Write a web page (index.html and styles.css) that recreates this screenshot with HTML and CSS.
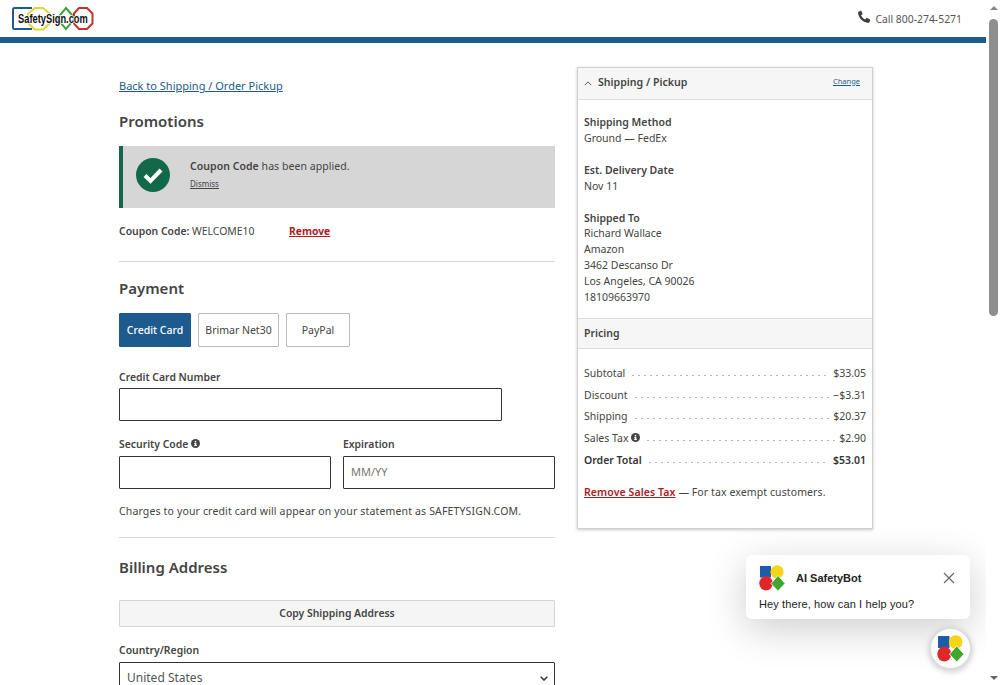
FILE: index.html
```html
<!DOCTYPE html>
<html lang="en">
<head>
<meta charset="utf-8">
<title>Checkout</title>
<link rel="stylesheet" href="styles.css">
</head>
<body>
<div class="window">
  <div class="page">
    <header class="topbar">
      <svg class="logo" viewBox="0 0 82 25" width="82" height="25">
        <path d="M23 2 H31 L38 8 V17 L31 23.500 H23 L16 17 V8 Z" fill="#fff" stroke="#e6d435" stroke-width="2"/>
        <path d="M54 2 L63 12.500 L54 23 L45 12.500 Z" fill="#fff" stroke="#3ba53a" stroke-width="2"/>
        <path d="M67 2 H75 L80.500 7.500 V17.500 L75 23 H67 L62 17.500 V7.500 Z" fill="#fff" stroke="#c8322d" stroke-width="2"/>
        <path d="M20 2 H2.500 Q1 2 1 3.500 V21.500 Q1 23 2.500 23 H20" fill="none" stroke="#1d5a94" stroke-width="2"/>
        <text transform="translate(6 16.500) scale(.745 1)" class="logo-text">SafetySign.com</text>
      </svg>
      <div class="call">
        <svg class="phone" viewBox="0 0 24 24" width="14" height="14"><path fill="#3f3f3f" d="M6.600 1.500 3.400 2.600C2 3.200 1.600 4.600 2 6.400c1.800 8 7.600 13.800 15.600 15.600 1.800.4 3.200 0 3.800-1.400l1.100-3.200c.2-.7-.1-1.300-.7-1.600l-4.600-2c-.6-.2-1.200-.1-1.600.4l-1.700 2.100c-3.100-1.500-5.600-4-7.100-7.100l2.100-1.700c.5-.4.6-1 .4-1.600l-2-4.600c-.3-.6-.9-.9-1.600-.8z"/></svg>
        <span>Call 800-274-5271</span>
      </div>
    </header>
    <div class="rule-bar"></div>
    <div class="content">
      <main class="left">
        <a class="back" href="#">Back to Shipping / Order Pickup</a>
        <h2 class="h-promo">Promotions</h2>
        <div class="alert">
          <svg class="check" viewBox="0 0 34 34" width="34" height="34"><circle cx="17" cy="17" r="17" fill="#14684a"/><path d="M9 17.500 14.500 23 25 12" fill="none" stroke="#fff" stroke-width="4"/></svg>
          <div class="alert-body">
            <p class="alert-msg"><b>Coupon Code</b> has been applied.</p>
            <a class="dismiss" href="#">Dismiss</a>
          </div>
        </div>
        <div class="coupon"><span class="coupon-val"><b>Coupon Code:</b> WELCOME10</span><a class="remove" href="#">Remove</a></div>
        <hr class="sep sep-a">
        <h2 class="h-pay">Payment</h2>
        <div class="tabs">
          <button class="tab tab-on">Credit Card</button>
          <button class="tab tab-net">Brimar Net30</button>
          <button class="tab tab-pp">PayPal</button>
        </div>
        <label class="lab lab-cc">Credit Card Number</label>
        <div class="field field-cc"></div>
        <div class="two">
          <div class="col-sec">
            <label class="lab">Security Code <svg class="info" viewBox="0 0 16 16" width="9" height="9"><use href="#i"/></svg></label>
            <div class="field"></div>
          </div>
          <div class="col-exp">
            <label class="lab">Expiration</label>
            <div class="field ph">MM/YY</div>
          </div>
        </div>
        <p class="note">Charges to your credit card will appear on your statement as SAFETYSIGN.COM.</p>
        <hr class="sep sep-b">
        <h2 class="h-bill">Billing Address</h2>
        <button class="copy">Copy Shipping Address</button>
        <label class="lab lab-country">Country/Region</label>
        <div class="field select"><span>United States</span>
          <svg class="select-chev" viewBox="0 0 8 5" width="8" height="5"><path d="M.7.7 4 4 7.300.7" fill="none" stroke="#333" stroke-width="1.500"/></svg>
        </div>
      </main>
      <aside class="summary">
        <div class="sum-head">
          <svg class="chev" viewBox="0 0 10 6" width="8" height="5"><path d="M1 5 5 1 9 5" fill="none" stroke="#555" stroke-width="1.200"/></svg>
          <strong>Shipping / Pickup</strong>
          <a href="#">Change</a>
        </div>
        <div class="sum-body">
          <div class="block"><b>Shipping Method</b><br>Ground — FedEx</div>
          <div class="block"><b>Est. Delivery Date</b><br>Nov 11</div>
          <div class="block"><b>Shipped To</b><br>Richard Wallace<br>Amazon<br>3462 Descanso Dr<br>Los Angeles, CA 90026<br>18109663970</div>
        </div>
        <div class="price-head">Pricing</div>
        <div class="prices">
          <div class="pr"><span>Subtotal</span><i></i><span>$33.05</span></div>
          <div class="pr"><span>Discount</span><i></i><span>−$3.31</span></div>
          <div class="pr"><span>Shipping</span><i></i><span>$20.37</span></div>
          <div class="pr"><span>Sales Tax <svg class="info" viewBox="0 0 16 16" width="9" height="9"><use href="#i"/></svg></span><i></i><span>$2.90</span></div>
          <div class="pr pr-total"><span>Order Total</span><i></i><span>$53.01</span></div>
          <p class="exempt"><a href="#">Remove Sales Tax</a> — For tax exempt customers.</p>
        </div>
      </aside>
    </div>
  </div>
  <div class="scrollbar">
    <span class="arrow-up"></span>
    <span class="thumb"></span>
    <span class="arrow-down"></span>
  </div>
</div>

<div class="chat-card">
  <div class="chat-top">
    <svg viewBox="0 0 26 26" width="26" height="26"><use href="#bot"/></svg>
    <strong>AI SafetyBot</strong>
    <svg class="x" viewBox="0 0 12 12" width="12" height="12"><path d="M1 1 11 11M11 1 1 11" stroke="#666" stroke-width="1.200"/></svg>
  </div>
  <p>Hey there, how can I help you?</p>
</div>
<div class="chat-btn"><svg viewBox="0 0 26 26" width="27" height="27"><use href="#bot"/></svg></div>

<svg class="defs" width="0" height="0">
  <defs>
    <symbol id="i" viewBox="0 0 16 16"><circle cx="8" cy="8" r="8" fill="#444"/><rect x="6.500" y="7" width="3" height="5.500" fill="#fff"/><rect x="5.500" y="11" width="5" height="1.500" fill="#fff"/><rect x="5.500" y="7" width="3" height="1.300" fill="#fff"/><circle cx="8" cy="4.500" r="1.500" fill="#fff"/></symbol>
    <symbol id="bot" viewBox="0 0 26 26">
      <rect x="1" y="1" width="11" height="11.500" fill="#1d5ca8"/>
      <circle cx="18" cy="6.800" r="6.600" fill="#f7d416"/>
      <ellipse cx="7" cy="18.300" rx="6.700" ry="7.200" fill="#e0262b"/>
      <path d="M19 10.500 26 18.500 19 26 12 18.500Z" fill="#3ea82c" stroke="#fff" stroke-width=".8" stroke-linejoin="round"/>
    </symbol>
  </defs>
</svg>
</body>
</html>
```
FILE: styles.css
```css
* { box-sizing: border-box; }
html, body { margin: 0; height: 685px; overflow: hidden; background: #fff; }
body { font-family: "Noto Sans", "Open Sans", sans-serif; font-size: 10.5px; color: #444; line-height: 16px; }
a { color: inherit; }
b, strong { font-weight: 600; }
h2, p { margin: 0; }

.window { display: flex; height: 685px; }
.page { width: 986px; flex: none; }

.topbar { height: 37px; display: flex; justify-content: space-between; padding: 6px 24px 0 12px; }
.logo { display: block; overflow: visible; }
.logo-text { font-family: "Liberation Sans", sans-serif; font-weight: 700; font-size: 12.5px; fill: #111; paint-order: stroke; stroke: #fff; stroke-width: 1.5px; }
.call { display: flex; align-items: flex-start; gap: 4px; font-size: 10.4px; color: #555; padding-top: 4px; height: 20px; }
.call span { margin-top: 1px; }
.phone { margin-top: 0; }
.rule-bar { height: 6px; background: #1d5a8e; }

.content { display: flex; align-items: flex-start; padding-left: 119px; gap: 22px; }
.left { width: 436px; padding-top: 35px; }
.back { display: block; color: #1d5a8e; font-size: 11px; height: 16px; }

h2 { font-size: 15px; font-weight: 600; color: #444; line-height: 22px; }
.h-promo { margin-top: 16px; }
.alert { margin-top: 14px; height: 62px; background: #d6d6d6; border-left: 4px solid #14684a; display: flex; align-items: center; padding-left: 13px; gap: 20px; }
.check { margin-top: -4px; }
.alert-body { margin-top: -6px; }
.alert-msg { font-size: 10.5px; margin-top: -1px; letter-spacing: .05px; }
.dismiss { display: block; font-size: 8px; line-height: 12px; margin-top: 4px; }
.coupon { margin-top: 15px; height: 16px; display: flex; }
.coupon-val { width: 170px; font-size: 10.4px; }
.remove { color: #a8201f; font-weight: 700; font-size: 10.3px; }
.sep { border: 0; border-top: 1px solid #d8d8d8; margin: 0; }
.sep-a { margin-top: 22px; }
.h-pay { margin-top: 15px; }
.tabs { display: flex; gap: 7px; margin-top: 14px; }
.tab { height: 34px; font: inherit; font-size: 10.5px; background: #fff; border: 1px solid #bbb; border-radius: 1px; color: #444; padding: 0; }
.tab-on { width: 72px; background: #1d5a8e; border-color: #1d5a8e; color: #fff; font-weight: 500; }
.tab-net { width: 81px; }
.tab-pp { width: 64px; }
.lab { display: block; font-weight: 600; font-size: 10.4px; color: #444; height: 16px; }
.lab-cc { margin-top: 22px; }
.field { height: 33px; border: 1px solid #333; border-radius: 1px; margin-top: 3px; background: #fff; }
.field-cc { width: 383px; }
.two { display: flex; gap: 12px; margin-top: 15px; }
.col-sec { width: 212px; }
.col-exp { width: 212px; }
.two .lab { height: 16px; }
.two .field { margin-top: 4px; }
.ph { color: #777; font-size: 11px; line-height: 30px; padding-left: 7px; }
.note { margin-top: 14px; font-size: 10.5px; letter-spacing: .15px; }
.sep-b { margin-top: 18px; }
.h-bill { margin-top: 18px; }
.copy { display: block; width: 100%; height: 27px; margin-top: 22px; background: #f5f5f5; border: 1px solid #d5d5d5; border-radius: 1px; font: inherit; font-weight: 600; font-size: 10.4px; color: #444; padding: 0 0 2px; }
.lab-country { margin-top: 15px; }
.select { height: 40px; margin-top: 4px; display: flex; justify-content: space-between; padding: 7px 6px 0 7px; font-size: 12px; color: #555; }
.select-chev { margin-top: 6px; }

.summary { width: 296px; margin-top: 24px; border: 1px solid #d0d0d0; box-shadow: 0 1px 3px rgba(0,0,0,.22); background: #fff; height: 462px; }
.sum-head { height: 32px; background: #f6f6f6; border-bottom: 1px solid #ddd; display: flex; align-items: center; padding: 0 12px 4px 6px; }
.chev { margin-top: 3px; margin-right: 6px; }
.sum-head strong { flex: 1; font-size: 10.6px; color: #444; }
.sum-head a { font-size: 7.5px; color: #1d5a8e; margin-top: -1px; }
.sum-body { padding: 15.4px 6px 12.6px; line-height: 15.8px; }
.block { margin-bottom: 16px; }
.block:last-child { margin-bottom: 0; }
.price-head { height: 31px; line-height: 29px; background: #f6f6f6; border-top: 1px solid #ddd; border-bottom: 1px solid #ddd; padding-left: 6px; font-weight: 600; }
.prices { padding: 16px 6px 0; }
.pr { display: flex; align-items: baseline; height: 21.7px; }
.pr i { flex: 1; height: 3px; margin: 0 4px 0 5px; background: radial-gradient(circle, #b5b5b5 .9px, transparent 1.1px) left center / 6px 3px repeat-x; }
.pr-total { font-weight: 600; color: #333; }
.exempt { margin-top: 11px; letter-spacing: .1px; }
.exempt a { color: #a8201f; font-weight: 600; }

.scrollbar { width: 15px; flex: none; background: #fff; position: relative; z-index: 2; display: flex; flex-direction: column; align-items: center; }
.arrow-up { width: 0; height: 0; margin-top: 6px; border: 4px solid transparent; border-top: 0; border-bottom: 4px solid #888; }
.thumb { width: 9px; height: 297px; margin-top: 9px; background: #8e8e8e; border-radius: 5px; }
.arrow-down { width: 0; height: 0; margin-top: auto; margin-bottom: 5px; border: 4px solid transparent; border-bottom: 0; border-top: 4px solid #666; }

.chat-card { position: absolute; z-index: 1; left: 746px; top: 555px; width: 224px; height: 64px; background: #fff; border-radius: 6px; box-shadow: 0 10px 40px rgba(0,0,0,.2); padding: 9px 15px 0 13px; font-family: "Liberation Sans", sans-serif; color: #222; }
.chat-top { display: flex; align-items: center; height: 28px; }
.chat-top strong { flex: 1; margin-left: 11px; font-weight: 700; font-size: 11px; }
.chat-card p { font-size: 11px; line-height: 14px; margin-top: 5px; letter-spacing: .12px; }
.chat-btn { position: absolute; z-index: 1; left: 929px; top: 627px; width: 43px; height: 43px; border-radius: 50%; background: #fff; border: 2px solid #ddd; box-shadow: 0 2px 6px rgba(0,0,0,.2); display: flex; align-items: center; justify-content: center; }
.defs { position: absolute; }
```
